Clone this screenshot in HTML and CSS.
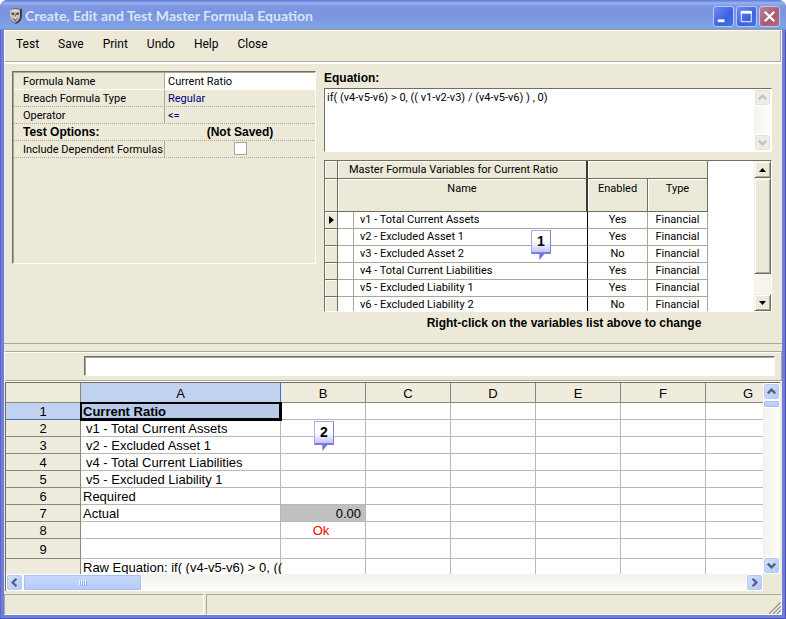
FILE: index.html
```html
<!DOCTYPE html>
<html lang="en">
<head>
<meta charset="utf-8">
<title>Create, Edit and Test Master Formula Equation</title>
<link rel="stylesheet" href="styles.css">
</head>
<body>
<div class="window">
  <header class="titlebar">
    <svg class="app-icon" viewBox="0 0 14 16" aria-hidden="true">
      <path d="M1 1q6-1 12 0v7q0 5-6 8q-6-3-6-8z" fill="#3c3c40"/>
      <path d="M1 1.500q5-1 10 0v6.500q0 4-5 7q-5-3-5-7z" fill="#c4c2ba"/>
      <path d="M2.500 4.500l3 .5-.5 2-2.500-.5zM7 5l3-.5v2l-2.500.5z" fill="#4a4846"/>
      <path d="M6.200 6v3.500M3.500 10.500q2.500 3 5.200 0M5 13h2.500" stroke="#66645e" fill="none"/>
      <path d="M3 3q3-1 6 0M4.500 9q1.500 1 3 0" stroke="#f4f2ec" fill="none"/>
    </svg>
    <h1 class="title">Create, Edit and Test Master Formula Equation</h1>
    <button class="win-btn" aria-label="Minimize"><svg viewBox="0 0 20 20"><path d="M4 14.500h7" stroke="#fff" stroke-width="3"/></svg></button>
    <button class="win-btn" aria-label="Maximize"><svg viewBox="0 0 20 20"><path d="M4.500 5v10.500h10.500V5" stroke="#fff" fill="none"/><path d="M4 5.500h11.500" stroke="#fff" stroke-width="3"/></svg></button>
    <button class="win-btn win-close" aria-label="Close window"><svg viewBox="0 0 20 20"><path d="M5 5l10 10M15 5L5 15" stroke="#fff" stroke-width="2.400"/></svg></button>
  </header>

  <div class="frame">
    <nav class="menubar">
      <button>Test</button><button>Save</button><button>Print</button><button>Undo</button><button>Help</button><button>Close</button>
    </nav>

    <main class="editor">
      <section class="props">
        <div class="prop current"><label for="fname">Formula Name</label><input id="fname" type="text" value="Current Ratio"></div>
        <div class="prop"><span class="key">Breach Formula Type</span><span class="val">Regular</span></div>
        <div class="prop"><span class="key">Operator</span><span class="val">&lt;=</span></div>
        <div class="prop heading"><span class="key">Test Options:</span><span class="val">(Not Saved)</span></div>
        <div class="prop"><label for="dep">Include Dependent Formulas</label><span class="val check"><input id="dep" type="checkbox"></span></div>
      </section>

      <section class="detail">
        <label class="eq-label" for="eq">Equation:</label>
        <div class="eq-box">
          <textarea id="eq">if( (v4-v5-v6) &gt; 0, (( v1-v2-v3) / (v4-v5-v6) ) , 0)</textarea>
          <div class="scroll faded">
            <button class="xp-btn" aria-label="Scroll up"><svg viewBox="0 0 16 16"><path d="M4 10l4-4 4 4"/></svg></button>
            <button class="xp-btn" aria-label="Scroll down"><svg viewBox="0 0 16 16"><path d="M4 6l4 4 4-4"/></svg></button>
          </div>
        </div>

        <div class="vars-box">
          <div class="vars-view">
            <table class="vars">
              <colgroup><col class="c-sel"><col class="c-tick"><col class="c-name"><col class="c-en"><col class="c-type"></colgroup>
              <thead>
                <tr class="group"><th></th><th colspan="2" class="group-name">Master Formula Variables for Current Ratio</th><th colspan="2"></th></tr>
                <tr class="cols"><th></th><th colspan="2" class="name-head">Name</th><th>Enabled</th><th>Type</th></tr>
              </thead>
              <tbody>
                <tr><th><svg class="pointer" viewBox="0 0 5 8"><path d="M0 0l5 4-5 4z"/></svg></th><td></td><td class="name">v1 - Total Current Assets</td><td>Yes</td><td>Financial</td></tr>
                <tr><th></th><td></td><td class="name">v2 - Excluded Asset 1</td><td>Yes</td><td>Financial</td></tr>
                <tr><th></th><td></td><td class="name">v3 - Excluded Asset 2</td><td>No</td><td>Financial</td></tr>
                <tr><th></th><td></td><td class="name">v4 - Total Current Liabilities</td><td>Yes</td><td>Financial</td></tr>
                <tr><th></th><td></td><td class="name">v5 - Excluded Liability 1</td><td>Yes</td><td>Financial</td></tr>
                <tr><th></th><td></td><td class="name">v6 - Excluded Liability 2</td><td>No</td><td>Financial</td></tr>
              </tbody>
            </table>
          </div>
          <div class="scroll classic">
            <button class="old-btn" aria-label="Scroll up"><svg viewBox="0 0 7 4"><path d="M0 4l3.500-4 3.500 4z"/></svg></button>
            <div class="old-thumb"></div>
            <button class="old-btn" aria-label="Scroll down"><svg viewBox="0 0 7 4"><path d="M0 0l3.500 4 3.500-4z"/></svg></button>
          </div>
          <div class="callout callout-one"><b>1</b><svg viewBox="0 0 10 7"><path d="M3 0h6L3 7z"/></svg></div>
        </div>
        <p class="hint">Right-click on the variables list above to change</p>
      </section>
    </main>

    <div class="formula-bar"><input type="text" aria-label="Cell contents"></div>

    <section class="sheet">
      <div class="sheet-view">
        <table class="grid">
          <colgroup><col class="g-row"><col class="g-a"><col class="g-c"><col class="g-c"><col class="g-c"><col class="g-c"><col class="g-c"><col class="g-c"></colgroup>
          <thead><tr><th></th><th class="on">A</th><th>B</th><th>C</th><th>D</th><th>E</th><th>F</th><th>G</th></tr></thead>
          <tbody>
            <tr><th class="on">1</th><td class="selected">Current Ratio</td><td></td><td></td><td></td><td></td><td></td><td></td></tr>
            <tr><th>2</th><td class="indent">v1 - Total Current Assets</td><td></td><td></td><td></td><td></td><td></td><td></td></tr>
            <tr><th>3</th><td class="indent">v2 - Excluded Asset 1</td><td></td><td></td><td></td><td></td><td></td><td></td></tr>
            <tr><th>4</th><td class="indent">v4 - Total Current Liabilities</td><td></td><td></td><td></td><td></td><td></td><td></td></tr>
            <tr><th>5</th><td class="indent">v5 - Excluded Liability 1</td><td></td><td></td><td></td><td></td><td></td><td></td></tr>
            <tr><th>6</th><td>Required</td><td></td><td></td><td></td><td></td><td></td><td></td></tr>
            <tr><th>7</th><td>Actual</td><td class="actual">0.00</td><td></td><td></td><td></td><td></td><td></td></tr>
            <tr><th>8</th><td></td><td class="ok">Ok</td><td></td><td></td><td></td><td></td><td></td></tr>
            <tr class="tall"><th>9</th><td></td><td></td><td></td><td></td><td></td><td></td><td></td></tr>
            <tr><th></th><td>Raw Equation: if( (v4-v5-v6) &gt; 0, ((</td><td></td><td></td><td></td><td></td><td></td><td></td></tr>
          </tbody>
        </table>
        <div class="callout callout-two"><b>2</b><svg viewBox="0 0 10 7"><path d="M3 0h6L3 7z"/></svg></div>
      </div>
      <div class="scroll xp">
        <button class="xp-btn" aria-label="Scroll up"><svg viewBox="0 0 16 16"><path d="M4 10l4-4 4 4"/></svg></button>
        <div class="xp-thumb"></div>
        <button class="xp-btn" aria-label="Scroll down"><svg viewBox="0 0 16 16"><path d="M4 6l4 4 4-4"/></svg></button>
      </div>
      <div class="scroll xp across">
        <button class="xp-btn" aria-label="Scroll left"><svg viewBox="0 0 16 16"><path d="M10 4L6 8l4 4"/></svg></button>
        <div class="xp-thumb"><svg viewBox="0 0 8 6"><path d="M.5 0v5M2.500 0v5M4.500 0v5M6.500 0v5" stroke="#eef4fe"/><path d="M1.500 1v5M3.500 1v5M5.500 1v5M7.500 1v5" stroke="#8cb0f8"/></svg></div>
        <button class="xp-btn" aria-label="Scroll right"><svg viewBox="0 0 16 16"><path d="M6 4l4 4-4 4"/></svg></button>
      </div>
      <div class="corner"></div>
    </section>

    <footer class="status">
      <div class="pane"></div>
      <div class="pane"></div>
      <svg class="grip" viewBox="0 0 12 12"><path d="M0 12L12 0M4 12l8-8M8 12l4-4" stroke="#9d9a86" stroke-width="1.500"/><path d="M2 12L12 2M6 12l6-6M10 12l2-2" stroke="#fff"/></svg>
    </footer>
  </div>
</div>
</body>
</html>
```
FILE: styles.css
```css
* { box-sizing: border-box; }

body {
  margin: 0;
  background: #fff;
  color: #000;
  font: 11px/17px Roboto, "Liberation Sans", sans-serif;
}

button, input, textarea { font: inherit; color: inherit; }
button { padding: 0; border: 0; background: none; }

.window {
  display: flex;
  flex-direction: column;
  height: 100vh;
  padding: 0 4px 4px;
  border-radius: 8px 8px 0 0;
  background: #6f7edb;
  box-shadow: inset -1px -1px #4a4fb5, inset 1px 0 #5a66cf;
  overflow: hidden;
}

/* Title bar */
.titlebar {
  display: flex;
  align-items: center;
  gap: 2px;
  flex: none;
  height: 30px;
  margin: 0 -4px;
  padding: 2px 6px 0 9px;
  background: linear-gradient(#6078d6 0, #98b2f0 3px, #8098e2 6px, #7a94df 14px, #7ea0e6 24px, #7ca2e8 28px, #6a84da 30px);
}
.app-icon { width: 14px; height: 16px; flex: none; }
.title {
  flex: 1;
  margin: 0;
  color: #d8e4f8;
  font: bold 14px/18px Lato, sans-serif;
  white-space: nowrap;
}
.win-btn {
  width: 21px;
  height: 21px;
  border: 1px solid #b8c8f4;
  border-radius: 3px;
  background: linear-gradient(135deg, #6e8cf0, #3c62e0 60%, #4a74ee);
}
.win-btn svg { display: block; width: 19px; height: 19px; }
.win-close { background: linear-gradient(135deg, #c08090, #a85c70 60%, #b46a7c); }

.frame {
  display: flex;
  flex-direction: column;
  flex: 1;
  min-height: 0;
  background: #ece9d8;
}

/* Menu bar */
.menubar {
  display: flex;
  gap: 19px;
  flex: none;
  height: 34px;
  padding: 5px 11px 9px;
  border: solid #fff;
  border-width: 1px 1px 2px;
  box-shadow: inset 0 -1px #aca899, inset -1px 0 #aca899, 0 -1px #9d9a90;
  font-size: 12px;
}

/* Editor */
.editor {
  display: grid;
  grid-template-columns: 304px 1fr;
  gap: 8px;
  flex: none;
  padding: 7px 10px 11px 8px;
  border-bottom: 1px solid #aca899;
}
.props {
  height: 193px;
  padding: 1px 0 0 1px;
  border: 1px solid;
  border-color: #716f64 #fff #fff #716f64;
  box-shadow: inset 1px 1px #aca899;
}
.prop {
  display: grid;
  grid-template-columns: 151px 1fr;
  height: 17px;
  border-bottom: 1px dotted #aca899;
}
.prop > * { height: 16px; }
.prop > :first-child {
  padding-left: 9px;
  border-right: 1px solid #aca899;
  white-space: nowrap;
}
.prop .val { padding-left: 3px; color: #000080; }
.prop.current { border-bottom: 1px solid #fff; }
.prop input[type="text"] {
  min-width: 0;
  width: 100%;
  padding: 1px 3px 0;
  border: 0;
  background: #fff;
}
.prop.heading, .eq-label, .hint { font: bold 12px/17px "Liberation Sans", Arial, sans-serif; }
.prop.heading > :first-child { border-right: 0; }
.prop.heading .val { padding: 0; color: #000; text-align: center; }
.prop .check { padding: 1px 0 0; line-height: 13px; text-align: center; }
.check input {
  width: 13px;
  height: 13px;
  margin: 0;
  border: 1px solid #aca899;
  background: #fff;
  appearance: none;
}

.detail { display: flex; flex-direction: column; min-width: 0; }
.detail .eq-label { height: 17px; line-height: 14px; }
.eq-box {
  display: flex;
  height: 64px;
  border: 1px solid;
  border-color: #716f64 #fff #fff #716f64;
  background: #fff;
}
.eq-box textarea {
  flex: 1;
  min-width: 0;
  padding: 0 2px;
  border: 0;
  background: #fff;
  resize: none;
  overflow: hidden;
}

.scroll { display: flex; flex-direction: column; flex: none; width: 17px; }
.scroll.faded { justify-content: space-between; background: linear-gradient(90deg, #f4f3ee, #fefefb); }
.xp-btn {
  flex: none;
  width: 17px;
  height: 17px;
  border: 1px solid #fff;
  border-radius: 3px;
  background: linear-gradient(135deg, #d4e0fc, #b4c8f6);
  box-shadow: inset 0 0 0 1px #b8caf4;
}
.xp-btn svg { display: block; width: 15px; height: 15px; fill: none; stroke: #4d6185; stroke-width: 2.500; }
.faded .xp-btn { background: #efeee6; box-shadow: inset 0 0 0 1px #e4e2d6; }
.faded .xp-btn svg { stroke: #c3c2b8; }

/* Variables list */
.vars-box {
  position: relative;
  display: flex;
  height: 152px;
  margin-top: 8px;
  border: 1px solid;
  border-color: #716f64 #fff #fff #716f64;
  background: #fff;
}
.vars-view { flex: 1; min-width: 0; overflow: hidden; }
.vars { width: 383px; table-layout: fixed; border-spacing: 0; }
.c-sel { width: 13px; }
.c-tick { width: 16px; }
.c-name { width: 234px; }
.c-en { width: 60px; }
.c-type { width: 60px; }
.vars th, .vars td {
  height: 17px;
  padding: 0;
  border: solid #aca899;
  border-width: 0 1px 1px 0;
  font-weight: normal;
  line-height: 16px;
  text-align: center;
  white-space: nowrap;
}
.vars th {
  border-color: #716f64;
  background: #ece9d8;
  box-shadow: inset 1px 1px #fff;
}
.vars .group th { height: 18px; line-height: 17px; }
.vars .cols th { height: 33px; padding-top: 2px; vertical-align: top; }
.vars .group-name { padding-left: 11px; text-align: left; }
.vars td.name { padding-left: 6px; border-right-color: #000; text-align: left; }
.vars .group-name, .vars .name-head { border-right: 2px solid #3c3a35; }
.pointer { display: block; width: 5px; height: 8px; margin: 0 auto; }

.classic { background: #f6f4ec; }
.old-btn, .old-thumb {
  width: 17px;
  border: 1px solid;
  border-color: #f1efe2 #716f64 #716f64 #f1efe2;
  background: #ece9d8;
  box-shadow: inset 1px 1px #fff, inset -1px -1px #aca899;
}
.old-btn { display: grid; place-items: center; height: 17px; flex: none; }
.old-btn svg { width: 7px; height: 4px; }
.old-thumb { height: 96px; margin-bottom: auto; }

.hint {
  margin: 3px 0 0;
  padding-left: 32px;
  text-align: center;
}

/* Numbered markers over the tables */
.callout {
  position: absolute;
  width: 20px;
  height: 24px;
  border: 1px solid #a8a8e8;
  border-right-color: #8080d0;
  border-bottom: 2px solid #7c7cdc;
  background: linear-gradient(#fff 50%, #c4c4fa);
  font: bold 14px/21px "Liberation Sans", sans-serif;
  text-align: center;
}
.callout svg { position: absolute; left: 4px; top: 23px; width: 10px; height: 6px; fill: #7474d8; }
.callout-one { left: 206px; top: 69px; }
.callout-two { left: 308px; top: 38px; }

/* Formula bar */
.formula-bar {
  flex: none;
  height: 30px;
  margin-top: 7px;
  padding: 4px 6px 4px 79px;
  border: 1px solid;
  border-color: #aca899 #aca899 #aca899 #fff;
  box-shadow: inset 0 1px #fff, 0 1px #fff;
}
.formula-bar input {
  display: block;
  width: 100%;
  height: 20px;
  padding: 0 3px;
  border: 1px solid;
  border-color: #716f64 #fff #fff #716f64;
  background: #fff;
  box-shadow: inset 1px 1px #aca899;
}

/* Spreadsheet */
.sheet {
  display: grid;
  grid-template: minmax(0, 1fr) 17px / minmax(0, 1fr) 17px;
  flex: 1;
  min-height: 0;
  margin: 1px 2px 0 1px;
  border: solid #716f64;
  border-width: 1px 0 0 1px;
}
.sheet-view { position: relative; overflow: hidden; background: #fff; }
.grid {
  width: 785px;
  table-layout: fixed;
  border-spacing: 0;
  font: 13px/16px "Liberation Sans", Arial, sans-serif;
}
.g-row { width: 75px; }
.g-a { width: 200px; }
.g-c { width: 85px; }
.grid th, .grid td {
  height: 17px;
  padding: 1px 0 0 2px;
  border: solid #b8b8b8;
  border-width: 0 1px 1px 0;
  font-weight: normal;
  line-height: 15px;
  white-space: nowrap;
}
.grid th { padding: 1px 0 0; border-color: #8a887c; background: #efecde; }
.grid thead th { height: 20px; }
.grid th.on { background: #c1d2ee; border-color: #3f6fc8; }
.grid .tall th { height: 20px; }
.grid .indent { padding-left: 5px; }
.grid .selected { position: relative; background: #b8c9ea; font-weight: bold; }
.selected::after {
  content: "";
  position: absolute;
  inset: -1px -2px -2px -1px;
  border: solid #000;
  border-width: 2px 3px 3px 2px;
}
.grid .actual { padding-right: 4px; background: #c0c0c0; text-align: right; }
.grid .ok { padding: 1px 4px 0 0; color: #f00; text-align: center; }

.xp { background: linear-gradient(90deg, #f3f1ea, #fefefb); }
.xp-thumb {
  display: grid;
  place-items: center;
  height: 8px;
  margin-bottom: auto;
  border: 1px solid #fff;
  border-radius: 2px;
  background: linear-gradient(#c8d8fe, #b6caf8);
  box-shadow: inset 0 0 0 1px #a6bef2;
}
.xp-thumb svg { width: 8px; height: 6px; }
.across { flex-direction: row; width: auto; background: linear-gradient(#f3f1ea, #fefefb); }
.across .xp-thumb { width: 119px; height: 17px; margin: 0 auto 0 0; }
.corner { background: #ece9d8; }

/* Status bar */
.status {
  position: relative;
  display: grid;
  grid-template-columns: 200px 1fr;
  gap: 2px;
  flex: none;
  height: 24px;
  padding-top: 3px;
}
.pane {
  border: 1px solid;
  border-color: #aca899 #fff #fff #aca899;
}
.grip { position: absolute; right: 1px; bottom: 1px; width: 12px; height: 12px; }
```
